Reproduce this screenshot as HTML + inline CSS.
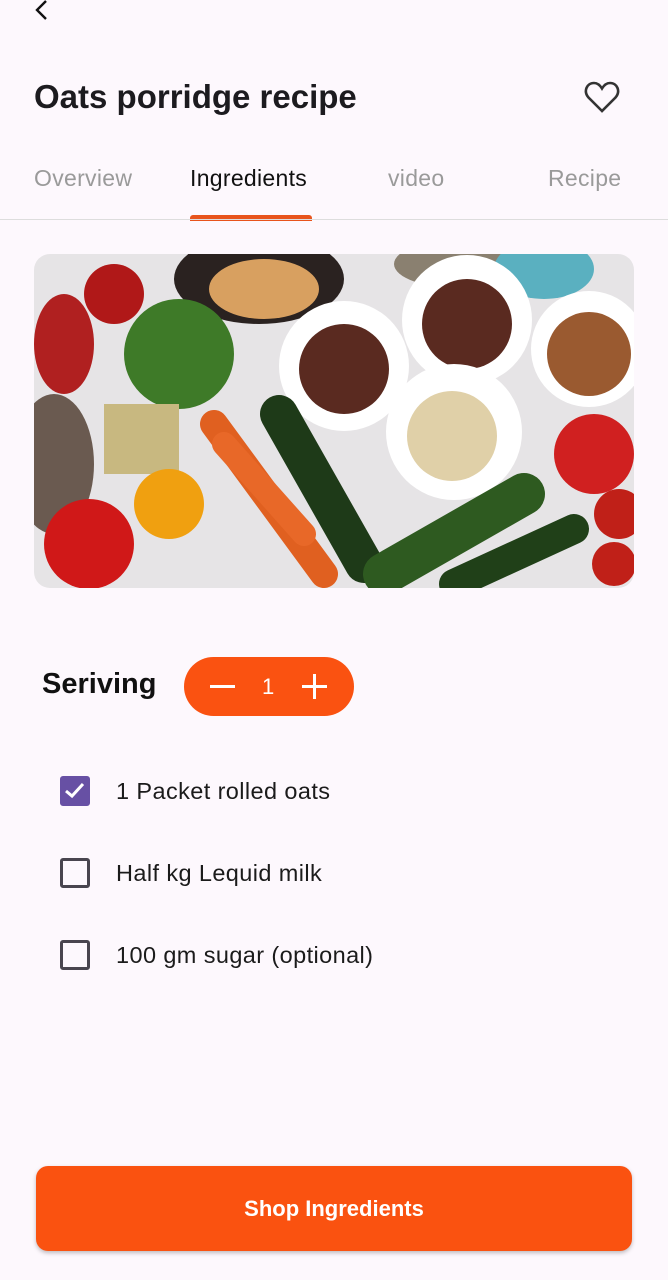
<!DOCTYPE html><html><head><meta charset="utf-8"><style>
body{margin:0;width:668px;height:1280px;background:#fdf8fd;font-family:"Liberation Sans",sans-serif;position:relative;overflow:hidden}
.a{position:absolute}
.tab{position:absolute;top:165px;font-size:23px;color:#9a9a9a;letter-spacing:.3px}
.cb{position:absolute;left:60px;width:30px;height:30px;border:3px solid #49454f;border-radius:3px;box-sizing:border-box}
.it{position:absolute;left:116px;font-size:23.5px;color:#1b1b1b;letter-spacing:.4px}
</style></head><body>
<svg class="a" style="left:28px;top:0" width="24" height="24"><path d="M18 1 L9 10 L18 19" fill="none" stroke="#111" stroke-width="2.4"/></svg>
<div class="a" style="left:34px;top:78px;font-size:33px;font-weight:bold;color:#1c1b1f">Oats porridge recipe</div>
<svg class="a" style="left:584px;top:80px" width="36" height="34"><path d="M18 31 L4.5 17.5 C-1 11 3 3 10 3 C14 3 16.5 6 18 8.5 C19.5 6 22 3 26 3 C33 3 37 11 31.5 17.5 Z" fill="none" stroke="#333" stroke-width="2.6"/></svg>
<div class="tab" style="left:34px">Overview</div>
<div class="tab" style="left:190px;color:#111">Ingredients</div>
<div class="tab" style="left:388px">video</div>
<div class="tab" style="left:548px">Recipe</div>
<div class="a" style="left:190px;top:215px;width:122px;height:6px;background:#e8541c;border-radius:3px 3px 0 0"></div>
<div class="a" style="left:0;top:219px;width:668px;height:1px;background:#ddd"></div>
<svg class="a" style="left:34px;top:254px;border-radius:16px;overflow:hidden" width="600" height="334">
<rect width="600" height="334" fill="#e6e4e6"/>
<ellipse cx="225" cy="25" rx="85" ry="45" fill="#2a2220"/>
<ellipse cx="230" cy="35" rx="55" ry="30" fill="#d8a060"/>
<ellipse cx="430" cy="10" rx="70" ry="25" fill="#8a8070"/>
<ellipse cx="510" cy="15" rx="50" ry="30" fill="#5ab0c0"/>
<circle cx="310" cy="112" r="65" fill="#fff"/><circle cx="310" cy="115" r="45" fill="#5a2a20"/>
<circle cx="433" cy="66" r="65" fill="#fff"/><circle cx="433" cy="70" r="45" fill="#5a2a20"/>
<circle cx="555" cy="95" r="58" fill="#fff"/><circle cx="555" cy="100" r="42" fill="#9a5a30"/>
<circle cx="420" cy="178" r="68" fill="#fff"/><circle cx="418" cy="182" r="45" fill="#e0d0a8"/>
<ellipse cx="30" cy="90" rx="30" ry="50" fill="#b02020"/>
<ellipse cx="80" cy="40" rx="30" ry="30" fill="#b01818"/>
<circle cx="145" cy="100" r="55" fill="#3e7a28"/>
<ellipse cx="20" cy="210" rx="40" ry="70" fill="#6a5a50"/>
<rect x="70" y="150" width="75" height="70" fill="#c8b880"/>
<path d="M180 170 L290 320" stroke="#e06020" stroke-width="28" stroke-linecap="round"/>
<path d="M190 190 L270 280" stroke="#e86828" stroke-width="24" stroke-linecap="round"/>
<path d="M245 160 L330 310" stroke="#1e3a18" stroke-width="38" stroke-linecap="round"/>
<path d="M350 320 L490 240" stroke="#2e5a20" stroke-width="42" stroke-linecap="round"/>
<path d="M420 330 L540 275" stroke="#204018" stroke-width="30" stroke-linecap="round"/>
<circle cx="135" cy="250" r="35" fill="#f0a010"/>
<circle cx="55" cy="290" r="45" fill="#d01818"/>
<ellipse cx="560" cy="200" rx="40" ry="40" fill="#d02020"/>
<circle cx="585" cy="260" r="25" fill="#c02018"/>
<circle cx="580" cy="310" r="22" fill="#c02018"/>
</svg>
<div class="a" style="left:42px;top:668px;font-size:29px;font-weight:bold;color:#111">Seriving</div>
<div class="a" style="left:184px;top:657px;width:170px;height:59px;border-radius:30px;background:#fa5211"></div>
<div class="a" style="left:210px;top:685px;width:25px;height:3px;background:#fff"></div>
<div class="a" style="left:262px;top:674px;font-size:22px;color:#fff">1</div>
<div class="a" style="left:302px;top:685px;width:25px;height:3px;background:#fff"></div>
<div class="a" style="left:313px;top:674px;width:3px;height:25px;background:#fff"></div>
<div class="cb" style="top:776px;background:#6750a4;border-color:#6750a4"><svg width="24" height="24" style="position:absolute;left:0;top:0"><path d="M3 12 L9 17 L20 5" fill="none" stroke="#fff" stroke-width="3"/></svg></div>
<div class="it" style="top:778px">1 Packet rolled oats</div>
<div class="cb" style="top:858px"></div>
<div class="it" style="top:860px">Half kg Lequid milk</div>
<div class="cb" style="top:940px"></div>
<div class="it" style="top:942px">100 gm sugar (optional)</div>
<div class="a" style="left:36px;top:1166px;width:596px;height:85px;border-radius:12px;background:#fa5210;box-shadow:0 2px 4px rgba(0,0,0,.25);color:#fff;font-size:22px;font-weight:bold;text-align:center;line-height:85px">Shop Ingredients</div>
</body></html>
